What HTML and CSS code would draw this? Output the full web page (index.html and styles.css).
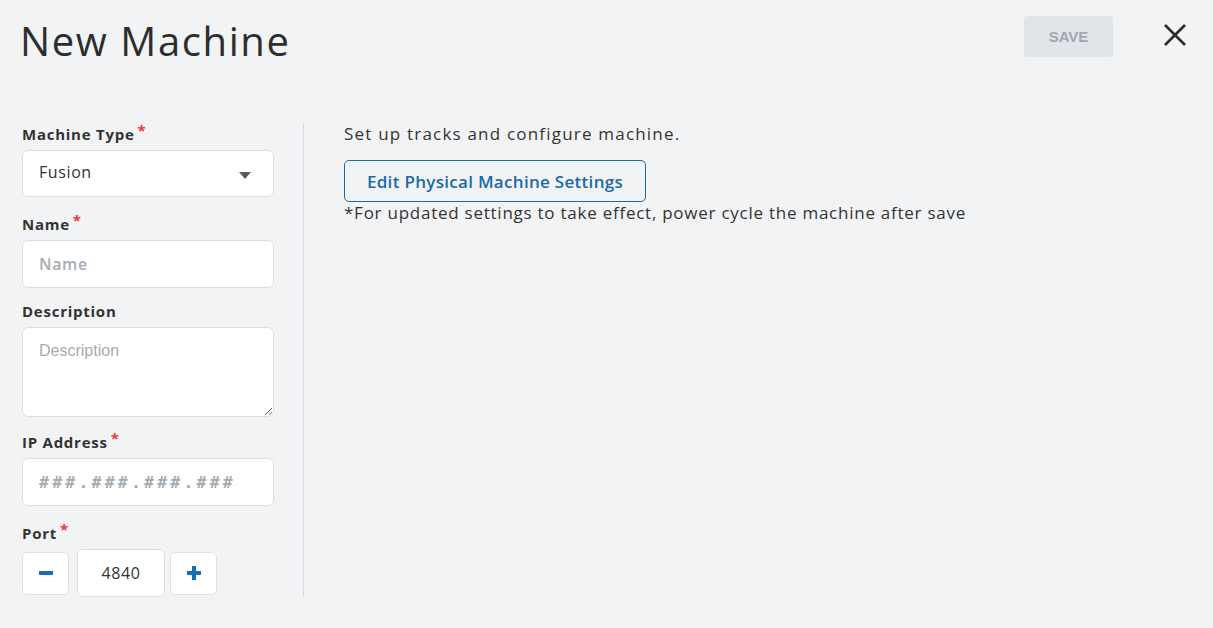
FILE: index.html
```html
<!DOCTYPE html>
<html>
<head>
<meta charset="utf-8">
<link rel="stylesheet" href="styles.css">
</head>
<body>
<div class="page">
  <header class="header">
    <h1 class="title">New Machine</h1>
    <div class="actions">
      <button class="save" disabled>SAVE</button>
      <button class="close" aria-label="Close">
        <svg width="22" height="22" viewBox="0 0 22 22"><path d="M1 1L21 21M21 1L1 21" stroke="#2b2b2b" stroke-width="2.6" stroke-linecap="butt"/></svg>
      </button>
    </div>
  </header>
  <main class="body">
    <section class="form">
      <div class="field">
        <label class="label">Machine Type<span class="req">*</span></label>
        <div class="select">
          <span>Fusion</span>
          <svg width="12" height="7" viewBox="0 0 12 7"><path d="M0 0H12L6 7Z" fill="#5a5a5a"/></svg>
        </div>
      </div>
      <div class="field">
        <label class="label">Name<span class="req">*</span></label>
        <input class="input name" placeholder="Name">
      </div>
      <div class="field">
        <label class="label">Description</label>
        <textarea class="textarea" placeholder="Description"></textarea>
      </div>
      <div class="field">
        <label class="label">IP Address<span class="req">*</span></label>
        <input class="input ip" placeholder="###.###.###.###">
      </div>
      <div class="field">
        <label class="label">Port<span class="req">*</span></label>
        <div class="stepper">
          <button class="step minus"><svg width="14" height="4" viewBox="0 0 14 4"><rect width="14" height="4" fill="#1a6eae"/></svg></button>
          <div class="port">4840</div>
          <button class="step plus"><svg width="14" height="14" viewBox="0 0 14 14"><rect y="5" width="14" height="4" fill="#1a6eae"/><rect x="5" width="4" height="14" fill="#1a6eae"/></svg></button>
        </div>
      </div>
    </section>
    <section class="details">
      <p class="intro">Set up tracks and configure machine.</p>
      <button class="edit">Edit Physical Machine Settings</button>
      <p class="note">*For updated settings to take effect, power cycle the machine after save</p>
    </section>
  </main>
</div>
</body>
</html>
```

FILE: styles.css
```css
* { box-sizing: border-box; }
html, body { margin: 0; padding: 0; }
body {
  background: #f2f3f5;
  font-family: "Open Sans", "Noto Sans", sans-serif;
  color: #333333;
  width: 1213px;
  height: 628px;
  overflow: hidden;
}
.page { padding: 16px 27px 0 20px; }
.header {
  display: flex;
  justify-content: space-between;
  align-items: flex-start;
  height: 108px;
}
.title {
  margin: 0;
  font-size: 40px;
  font-weight: 400;
  color: #2d2d2d;
  letter-spacing: 1.6px;
  line-height: 50px;
}
.actions { display: flex; align-items: flex-start; gap: 51px; }
.save {
  width: 89px;
  height: 41px;
  border: none;
  border-radius: 4px;
  background: #e1e5e9;
  color: #a0a8ae;
  font-family: "Liberation Sans", Arial, sans-serif;
  font-weight: 700;
  font-size: 15px;
  padding: 0;
}
.close {
  margin-top: 8px;
  border: none;
  background: none;
  padding: 0;
  width: 22px;
  height: 22px;
  display: flex;
}
.body { display: flex; padding-left: 2px; }
.form {
  width: 282px;
  border-right: 1px solid #d6d9dc;
  padding-right: 29px;
}
.field { display: flex; flex-direction: column; }
.label {
  font-weight: 700;
  font-size: 15px;
  letter-spacing: 0.75px;
  color: #333;
  height: 26px;
  line-height: 20px;
}
.req { color: #f0323c; font-size: 15px; margin-left: 3px; position: relative; top: -4px; }
.select, .input, .textarea {
  width: 252px;
  background: #fff;
  border: 1px solid #dcdfe2;
  border-radius: 6px;
  font-family: inherit;
}
.select {
  height: 47px;
  display: flex;
  align-items: center;
  justify-content: space-between;
  padding: 0 22px 0 16px;
  font-size: 16px;
  font-weight: 500;
  letter-spacing: 0.6px;
  margin-bottom: 17px;
  color: #333;
}
.select span { margin-top: -3px; }
.select svg { margin-top: 3px; }
.input {
  height: 48px;
  padding: 0 16px;
  font-size: 16px;
  color: #333;
  margin-bottom: 13px;
  outline: none;
}
.input.name::placeholder { color: #a4acb3; font-weight: 600; letter-spacing: 0.6px; }
.input.ip { margin-bottom: 17px; }
.input.ip::placeholder {
  color: #a4acb3;
  font-family: "DejaVu Sans Mono", monospace;
  font-weight: 700;
  font-size: 16.5px;
  letter-spacing: 3.2px;
}
.textarea {
  height: 90px;
  padding: 14px 16px;
  font-family: "Liberation Sans", Arial, sans-serif;
  font-size: 16px;
  resize: vertical;
  margin-bottom: 15px;
  outline: none;
  display: block;
}
.textarea::placeholder { color: #a4acb3; }
.stepper { display: flex; align-items: center; height: 48px; }
.step {
  width: 47px;
  height: 43px;
  background: #fff;
  border: 1px solid #dfe2e5;
  border-radius: 5px;
  display: flex;
  align-items: center;
  justify-content: center;
  padding: 0;
}
.minus { margin-right: 8px; }
.plus { margin-left: 5px; }
.port {
  width: 88px;
  height: 48px;
  background: #fff;
  border: 1px solid #dcdfe2;
  border-radius: 6px;
  display: flex;
  align-items: center;
  justify-content: center;
  font-size: 16px;
  font-weight: 500;
  letter-spacing: 0.6px;
  color: #333;
}
.details { padding-left: 40px; }
.intro { margin: 0; font-size: 17px; font-weight: 500; line-height: 20px; color: #333; letter-spacing: 1.2px; }
.edit {
  margin-top: 16px;
  width: 302px;
  height: 42px;
  background: transparent;
  border: 1px solid #1a6aa8;
  border-radius: 5px;
  color: #1a6aa8;
  font-family: inherit;
  font-weight: 600;
  font-size: 17px;
  letter-spacing: 0.3px;
  padding: 0;
}
.note { margin: 1px 0 0 0; font-size: 17px; font-weight: 500; line-height: 20px; color: #333; letter-spacing: 0.75px; }
```
